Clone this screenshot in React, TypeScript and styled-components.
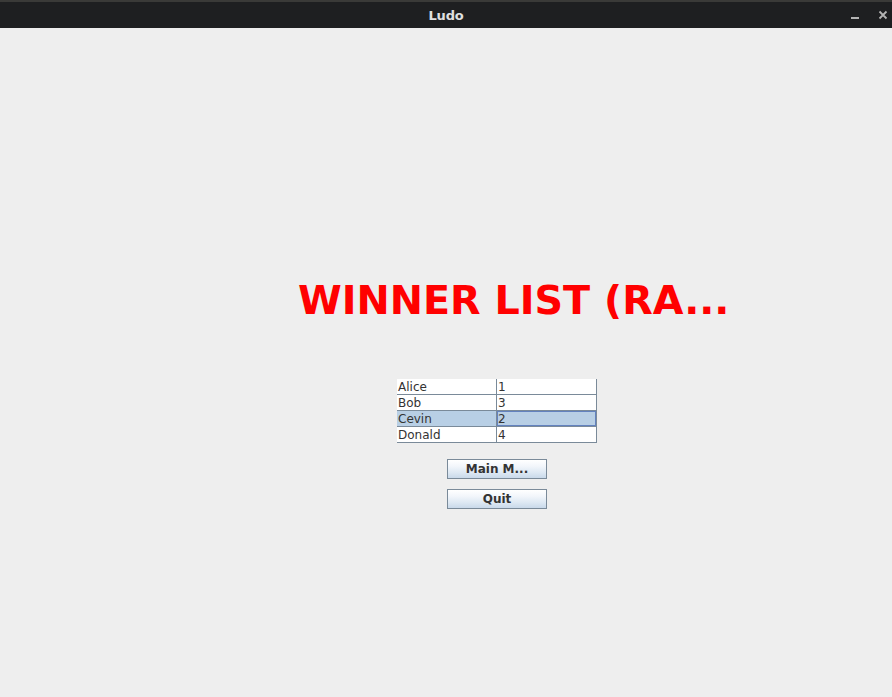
import React from "react";
import styled, { createGlobalStyle } from "styled-components";

const Global = createGlobalStyle`
  html, body { margin: 0; padding: 0; background: #eeeeee; }
  body { font-family: "DejaVu Sans", sans-serif; }
`;

const Frame = styled.div`
  width: 892px;
  height: 697px;
  display: flex;
  flex-direction: column;
  background: #eeeeee;
  overflow: hidden;
`;

const TitleBar = styled.div`
  height: 26px;
  flex: 0 0 26px;
  border-top: 2px solid #3a3a38;
  background: #1e1f21;
  display: flex;
  align-items: center;
  justify-content: center;
  position: relative;
`;

const TitleText = styled.span`
  color: #e0e0e0;
  font-family: "DejaVu Sans", sans-serif;
  font-weight: bold;
  font-size: 13px;
  letter-spacing: -0.2px;
`;

const WinControls = styled.div`
  position: absolute;
  right: 4px;
  top: 0;
  height: 26px;
  display: flex;
  align-items: center;
  gap: 18px;
`;

const Content = styled.div`
  flex: 1;
  display: flex;
  flex-direction: column;
  align-items: flex-start;
`;

const Heading = styled.div`
  margin-top: 249px;
  margin-left: 298px;
  color: #ff0000;
  font-family: "DejaVu Sans", sans-serif;
  font-weight: bold;
  font-size: 39.7px;
  line-height: 47px;
  white-space: nowrap;
`;

const Table = styled.div`
  margin-top: 55px;
  margin-left: 397px;
  width: 200px;
  display: grid;
  grid-template-columns: 100px 100px;
  background: #ffffff;
`;

const Cell = styled.div<{ $selected?: boolean; $focus?: boolean }>`
  height: 16px;
  box-sizing: border-box;
  border-right: 1px solid #7a8a99;
  border-bottom: 1px solid #7a8a99;
  background: ${(p) => (p.$selected ? "#b8cfe5" : "#ffffff")};
  color: #333333;
  font-family: "DejaVu Sans", sans-serif;
  font-size: 12px;
  line-height: 17px;
  padding-left: 1px;
  white-space: nowrap;
  overflow: hidden;
  ${(p) => (p.$focus ? "box-shadow: inset 1px 1px 0 #6382bf, inset -1px -1px 0 #6382bf;" : "")}
`;

const Buttons = styled.div`
  margin-left: 447px;
  margin-top: 16px;
  display: flex;
  flex-direction: column;
  gap: 10px;
`;

const Button = styled.button`
  width: 100px;
  height: 20px;
  box-sizing: border-box;
  border: 1px solid #7a8a99;
  background: linear-gradient(#ffffff 0%, #f2f6fb 35%, #dde8f3 70%, #c9d9ea 100%);
  color: #333333;
  font-family: "DejaVu Sans", sans-serif;
  font-weight: bold;
  font-size: 12px;
  line-height: 18px;
  padding: 0;
  margin: 0;
  cursor: default;
`;

const rows: [string, string][] = [
  ["Alice", "1"],
  ["Bob", "3"],
  ["Cevin", "2"],
  ["Donald", "4"],
];

export default function App() {
  return (
    <>
      <Global />
      <Frame>
        <TitleBar>
          <TitleText>Ludo</TitleText>
          <WinControls>
            <svg width="10" height="10" viewBox="0 0 10 10">
              <rect x="1" y="7" width="8" height="2" fill="#b4b4b4" />
            </svg>
            <svg width="10" height="10" viewBox="0 0 10 10">
              <path d="M1.5 1.5 L8.5 8.5 M8.5 1.5 L1.5 8.5" stroke="#b4b4b4" strokeWidth="1.8" />
            </svg>
          </WinControls>
        </TitleBar>
        <Content>
          <Heading>WINNER LIST (RA...</Heading>
          <Table>
            {rows.map(([name, rank], i) => (
              <React.Fragment key={name}>
                <Cell $selected={i === 2}>{name}</Cell>
                <Cell $selected={i === 2} $focus={i === 2}>{rank}</Cell>
              </React.Fragment>
            ))}
          </Table>
          <Buttons>
            <Button>Main M...</Button>
            <Button>Quit</Button>
          </Buttons>
        </Content>
      </Frame>
    </>
  );
}
